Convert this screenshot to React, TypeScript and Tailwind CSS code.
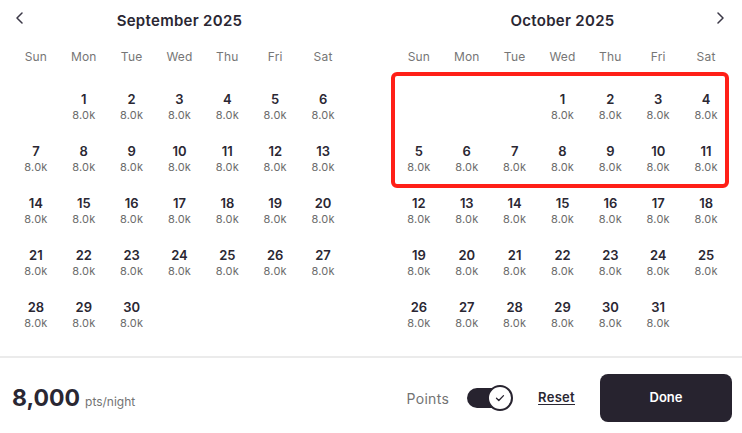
import React from "react";

const FONT = { fontFamily: "Inter, 'Noto Sans', sans-serif" };

const DAYS = ["Sun", "Mon", "Tue", "Wed", "Thu", "Fri", "Sat"];

function Month({
  title,
  offset,
  count,
  prev,
  next,
  highlight,
}: {
  title: string;
  offset: number;
  count: number;
  prev?: boolean;
  next?: boolean;
  highlight?: boolean;
}) {
  const cells: (number | null)[] = [];
  for (let i = 0; i < offset; i++) cells.push(null);
  for (let d = 1; d <= count; d++) cells.push(d);
  return (
    <div className="w-[336px] flex flex-col">
      <div className="h-[42px] flex items-center justify-center relative">
        {prev && (
          <svg className="absolute left-[2px] top-[12px]" width="12" height="12" viewBox="0 0 12 12" fill="none">
            <path d="M8 1L3 6l5 5" stroke="#3b3847" strokeWidth="1.5" strokeLinecap="round" strokeLinejoin="round" />
          </svg>
        )}
        {next && (
          <svg className="absolute right-[4px] top-[12px]" width="12" height="12" viewBox="0 0 12 12" fill="none">
            <path d="M4 1l5 5-5 5" stroke="#3b3847" strokeWidth="1.5" strokeLinecap="round" strokeLinejoin="round" />
          </svg>
        )}
        <span className="text-[15px] font-semibold text-[#2a2733] tracking-[0.3px]">{title}</span>
      </div>
      <div className="grid grid-cols-7 h-[30px] items-center">
        {DAYS.map((d) => (
          <div key={d} className="text-center text-[12px] text-[#767676] tracking-[0.2px]">
            {d}
          </div>
        ))}
      </div>
      <div className="relative mt-2">
        {highlight && (
          <div className="absolute left-[-4px] top-[-8px] w-[338px] h-[116px] border-4 border-[#ff1f17] rounded-[6px] pointer-events-none" />
        )}
        <div className="grid grid-cols-7">
          {cells.map((c, i) => (
            <div key={i} className="h-[52px] pt-[11px] flex flex-col items-center">
              {c !== null && (
                <>
                  <span className="text-[13px] leading-[17px] font-semibold text-[#2a2733]">{c}</span>
                  <span className="text-[11px] leading-[15px] text-[#6b6b6b] tracking-[0.2px]">8.0k</span>
                </>
              )}
            </div>
          ))}
        </div>
      </div>
    </div>
  );
}

export default function App() {
  return (
    <div style={FONT} className="w-[742px] h-[433px] bg-white overflow-hidden">
      <div className="h-[356px] px-3 flex gap-[48px]">
        <Month title="September 2025" offset={1} count={30} prev />
        <Month title="October 2025" offset={3} count={31} next highlight />
      </div>
      <div className="h-[2px] bg-[#ebebeb]" />
      <div className="pl-3 pr-[10px] pt-[16px] flex items-center">
        <div className="flex items-baseline gap-[5px] flex-1">
          <span className="text-[23px] font-bold text-[#2a2733]">8,000</span>
          <span className="text-[12px] text-[#737373]">pts/night</span>
        </div>
        <span className="text-[14px] text-[#737373] tracking-[0.3px]">Points</span>
        <div className="ml-[18px] relative w-[46px] h-[26px] flex items-center">
          <div className="w-[38px] h-[20px] rounded-full bg-[#27232f]" />
          <div className="absolute right-0 top-0 w-[26px] h-[26px] rounded-full bg-white border-2 border-[#27232f] flex items-center justify-center">
            <svg width="12" height="12" viewBox="0 0 12 12" fill="none">
              <path d="M2.5 6.2l2.3 2.3L9.5 3.6" stroke="#27232f" strokeWidth="1.3" strokeLinecap="round" strokeLinejoin="round" />
            </svg>
          </div>
        </div>
        <span className="ml-[25px] text-[13px] font-semibold text-[#2a2733] underline underline-offset-2 tracking-[0.3px]">Reset</span>
        <button className="ml-[25px] w-[132px] h-[48px] rounded-[8px] bg-[#27232f] text-white text-[13px] font-semibold">
          Done
        </button>
      </div>
    </div>
  );
}
